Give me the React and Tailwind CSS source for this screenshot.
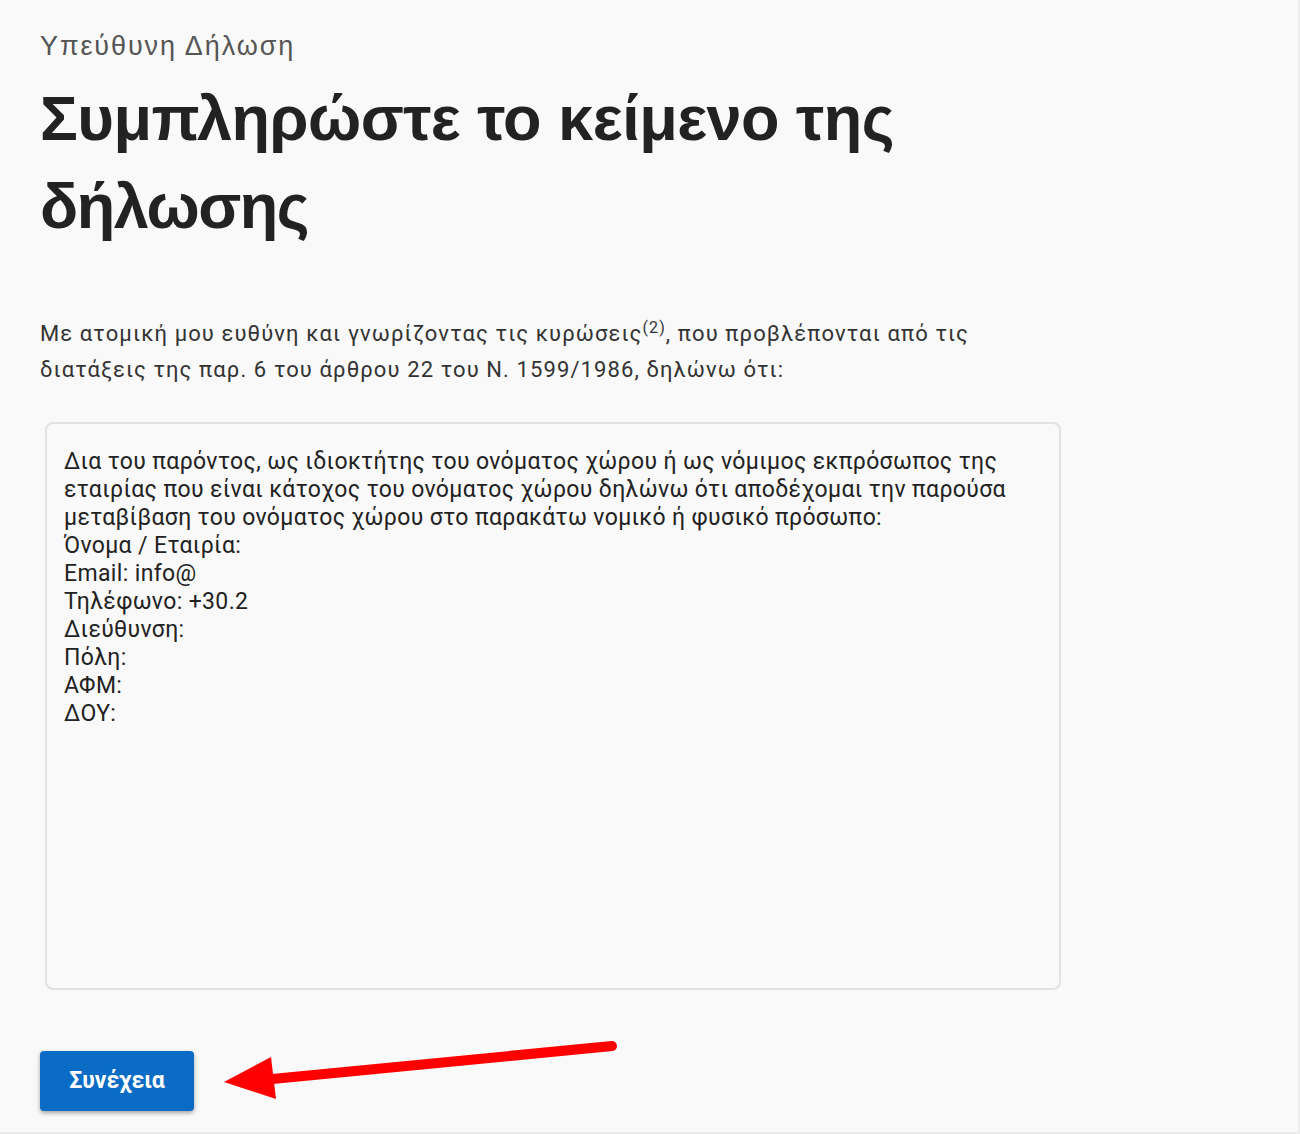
import React from "react";

export default function App() {
  const lines = [
    "Δια του παρόντος, ως ιδιοκτήτης του ονόματος χώρου ή ως νόμιμος εκπρόσωπος της",
    "εταιρίας που είναι κάτοχος του ονόματος χώρου δηλώνω ότι αποδέχομαι την παρούσα",
    "μεταβίβαση του ονόματος χώρου στο παρακάτω νομικό ή φυσικό πρόσωπο:",
    "Όνομα / Εταιρία:",
    "Email: info@",
    "Τηλέφωνο: +30.2",
    "Διεύθυνση:",
    "Πόλη:",
    "ΑΦΜ:",
    "ΔΟΥ:",
  ];
  return (
    <div className="relative min-h-[1134px] w-[1300px] bg-[#f9f9f9] border-r-2 border-b-2 border-[#ececec]">
      <div className="pl-[40px] pt-[28px]">
        <div className="text-[27px] leading-[36px] tracking-[1.9px] text-[#555] font-['Liberation_Sans',Arial,sans-serif]">
          Υπεύθυνη Δήλωση
        </div>
        <h1 className="mt-[10px] text-[63px] leading-[88px] font-bold text-[#222] font-['Liberation_Sans',Arial,sans-serif] tracking-[-0.5px]">
          Συμπληρώστε το κείμενο της
          <br />
          <span className="tracking-[-1.5px]">δήλωσης</span>
        </h1>
        <p className="mt-[66px] text-[22px] leading-[36px] tracking-[1.1px] text-[#333] font-['Roboto',sans-serif]">
          Με ατομική μου ευθύνη και γνωρίζοντας τις κυρώσεις<sup className="text-[16px]">(2)</sup>, που προβλέπονται από τις
          <br />
          διατάξεις της παρ. 6 του άρθρου 22 του Ν. 1599/1986, δηλώνω ότι:
        </p>
        <div className="mt-[34px] ml-[5px] w-[1016px] h-[568px] rounded-[8px] border-2 border-[#e2e2e2] bg-[#f9f9f9] pl-[17px] pt-[24px] font-['Roboto',sans-serif] text-[23px] leading-[28px] tracking-[0.36px] text-[#222]">
          {lines.map((l, i) => (
            <div key={i}>{l}</div>
          ))}
        </div>
        <button className="mt-[61px] w-[154px] h-[60px] rounded-[4px] bg-[#0a6cc4] text-white text-[23px] font-bold font-['Roboto',sans-serif] shadow-[0_2px_4px_rgba(0,0,0,0.35)]">
          Συνέχεια
        </button>
      </div>
      <svg className="absolute left-0 top-0 pointer-events-none" width="1300" height="1134">
        <line x1="612" y1="1046" x2="262" y2="1080" stroke="#ff0000" strokeWidth="10" strokeLinecap="round" />
        <polygon points="224,1082 271,1057 276,1099" fill="#ff0000" />
      </svg>
    </div>
  );
}
